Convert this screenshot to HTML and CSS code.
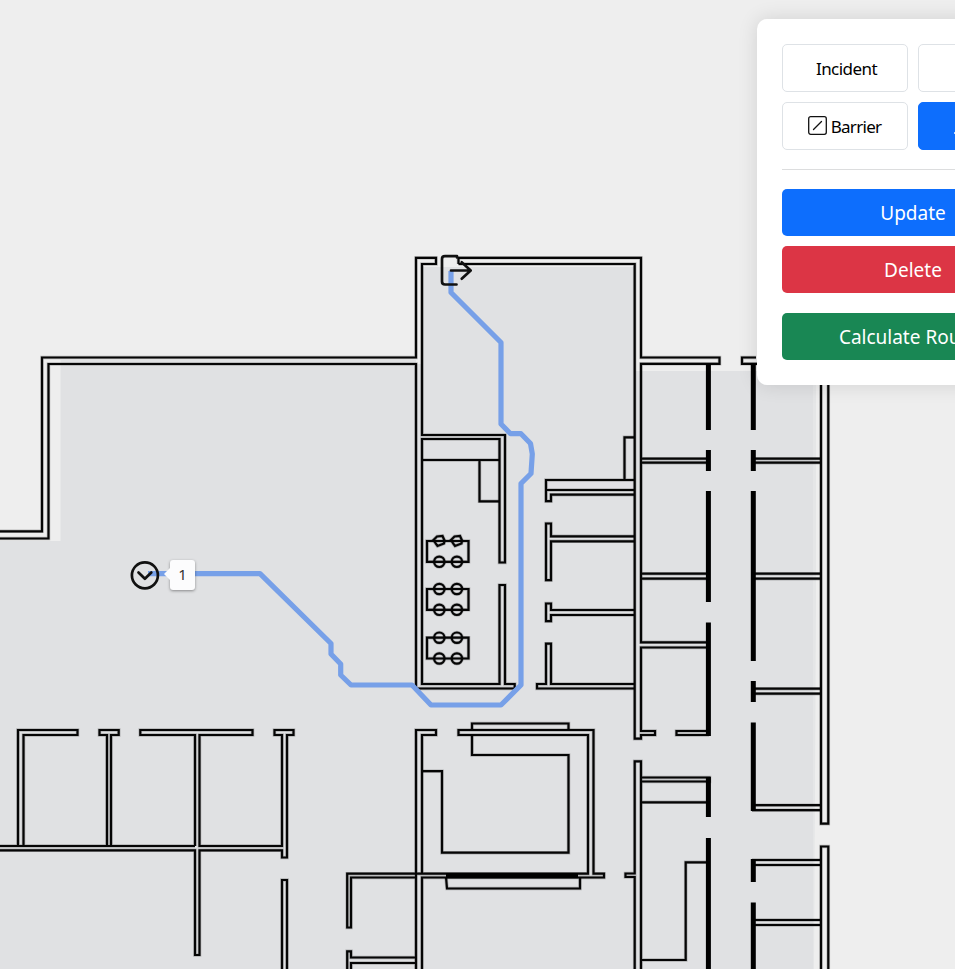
FILE: index.html
```html
<!DOCTYPE html>
<html lang="en">
<head>
<meta charset="utf-8">
<title>Floor plan routes</title>
<link rel="stylesheet" href="styles.css">
</head>
<body>
<main class="map">
  <svg class="plan" viewBox="0 0 955 969" width="955" height="969">
    <defs>
      <g id="table">
        <path d="M0 0H41.500V20.800H0Z"/>
        <circle cx="12.300" cy="20.800" r="5.200"/>
        <circle cx="29.900" cy="20.800" r="5.200"/>
      </g>
      <path id="angled-chairs" d="M6.500 -1L10 -4.500 15.500 -5 17.500 -.5 17 2.500 10.500 5 9 3ZM24 -1L27.500 -4.500 33 -5 35 -.5 34.500 2.500 28 5 26.500 3Z"/>
      <g id="chairs">
        <circle cx="12.300" cy="0" r="5.200"/>
        <circle cx="29.900" cy="0" r="5.200"/>
      </g>
      <g id="walls">
        <path d="M-5 531.300H42V357.500H416V257.800H436V264H422V435H505V562.500H499.500V439H422V684H499.500V585H505V684H514.700V688.500H416V364H48.500V538.500H-5"/>
        <path d="M422 460H499.500M479.500 460V501.300H499.500"/>
        <path d="M458.500 264V257.800H641V357.500H719.500V363.800H641V458.700H708M641 458.700V462.700H708M641 462.700V573.700H708M641 573.700V578.700H708M641 578.700V642.300H708M708 647.500H641V731H655V735H641V738.700H634.700V264H458.500"/>
        <path d="M706 731H676.500V735H709"/>
        <path d="M756 357.500H742V363.800H821M821 357.500V823.700H828.300V357.500M821 975V846.500H828.300V975"/>
        <path d="M753 458.700H821M753 462.700H821M753 573.700H821M753 578.700H821M753 688.700H821M753 693.700H821M753 805.200H821M752 810.200H821M752 860H821M753 865H821M753 920H821M753 925H821"/>
        <path d="M634.700 975V877H625.500V873.500H634.700V761.300H641V975M641 777.500H709.500V781.500H641M641 802.300H706M641 960H685.700V862.300H706"/>
        <path d="M634.700 480H546V501.200H551V494.700H634.700M546 490H634.700M624.500 480V437.300H634.700"/>
        <path d="M634.700 536.300H551V523.500H546V580.200H551V541.300H634.700M634.700 610H551V603.500H546V621.200H551V615H634.700M634.700 684H551V643.700H546V684H537V688.500H634.700"/>
        <path d="M18 846V730H77.500V735H23.500V846M107 846V735H99.500V730H118.700V735H111V846M195 846V735H140.300V730H252.500V735H199.500V846H282V735H274.500V730H293.500V735H287V857.500H282V850.300H199.500V955H195V850.300H-5M-5 846H195M282 975V880H287V975"/>
        <path d="M416 975V730H436V735H422V873.700M422 975V877.500H604V873.700H593.500V730H458.500V735H588V873.700H347.200V927.500H351V877.500H416M347.200 975V951.300H351V957.500H416M416 963H351V975"/>
        <path d="M472 730V723.500H568.500V730M472 735V755H568.500V852.700H442V771.200H422M446 877L447 888.500H580V877"/>
        <use href="#table" x="427" y="541"/>
        <use href="#angled-chairs" x="427" y="541"/>
        <use href="#table" x="427" y="589"/>
        <use href="#chairs" x="427" y="589"/>
        <use href="#table" x="427" y="637.700"/>
        <use href="#chairs" x="427" y="637.700"/>
      </g>
    </defs>
    <path class="floor" d="M0 541H60.500V360H416V364H422V267H634L635 269V371H813V969H0Z"/>
    <path class="floor-edge" d="M813 371H816V600L814 969H813Z"/>
    <path class="channel" d="M417 258H421V364H417ZM636 259H640V371H636ZM642 364H820V371H642Z"/>
    <path class="counter" d="M546 480H634V490H546Z"/>
    <use class="fringe" href="#walls"/>
    <use class="wall" href="#walls"/>
    <path class="solid" d="M708.400 364V430M708.400 450V471M708.400 491V602M708.400 622.500V736M708.400 777V817M708.400 838V969M753.300 364V430M753.300 450V471M753.300 491V661M753.300 681V702M753.300 722.500V811M753.300 859V882M753.300 902.500V969M446 875.700H578"/>
    <path class="route" d="M148 573.700H260L331 643.500V654L340.700 664V675L351 685H412L431 705H501L521 685V483.500L531 473.500L532.300 454L530.500 443.500L521 433.700H510.500L501 424V342.500L451 292.500V271"/>
    <g class="marker">
      <circle cx="144.900" cy="575.300" r="13"/>
      <path d="M138.500 572.500L144.900 578.800L151.300 572.500"/>
      <path d="M457 257.500V256.200H445Q442 256.200 442 259V281.500Q442 284.500 445 284.500H456.500M451 270.500H470.500M461.700 262.300L470.700 270.500L461.700 278.700"/>
    </g>
  </svg>
  <div class="tag">1</div>
</main>
<aside class="panel">
  <div class="tools">
    <button class="tool">Incident</button>
    <button class="tool"></button>
    <button class="tool barrier"><svg class="icon" viewBox="0 0 19 19"><rect x=".7" y=".7" width="17.600" height="17.600" rx="2"/><path d="M5.500 13.500L13.500 5.500"/></svg>Barrier</button>
    <button class="tool active"><svg class="icon" viewBox="0 0 19 19"><path d="M.5 17H18M2 16.500L9.500 3L17 16.500"/></svg></button>
  </div>
  <hr class="rule">
  <button class="action update">Update</button>
  <button class="action delete">Delete</button>
  <button class="action calculate">Calculate Routes</button>
</aside>
</body>
</html>
```
FILE: styles.css
```css
* { box-sizing: border-box; }
body {
  margin: 0;
  width: 955px;
  height: 969px;
  overflow: hidden;
  position: relative;
  background: #eee;
  font-family: "Noto Sans", "Open Sans", sans-serif;
}
.map { width: 955px; height: 969px; }
.plan { display: block; }
.floor { fill: #e0e1e3; }
.floor-edge { fill: #e5e6e7; }
.channel { fill: #eee; }
.counter { fill: #e0dfe4; }
.wall { fill: none; stroke: #050505; stroke-width: 2.2; }
.fringe { fill: none; stroke: rgba(0, 0, 0, .22); stroke-width: 3.6; }
.solid { fill: none; stroke: #000; stroke-width: 5; }
.route { fill: none; stroke: #77a0e8; stroke-width: 5.2; stroke-linejoin: round; }
.marker { fill: none; stroke: #111; stroke-width: 2.7; stroke-linecap: round; stroke-linejoin: round; }
.tag {
  position: absolute;
  left: 170px;
  top: 560px;
  width: 25px;
  height: 30px;
  border-radius: 3px;
  background: #fcfcfd;
  box-shadow: 0 1px 3px rgba(0, 0, 0, .4);
  color: #333;
  font: 15px/29px "Noto Sans", sans-serif;
  text-align: center;
}
.tag::before {
  content: "";
  position: absolute;
  left: -6px;
  top: 8px;
  border: solid transparent;
  border-width: 6px 6px 6px 0;
  border-right-color: #fcfcfd;
}
.panel {
  position: absolute;
  left: 757px;
  top: 19px;
  width: 312px;
  height: 366px;
  padding: 25px;
  border-radius: 10px;
  background: #fff;
  box-shadow: 0 0 20px rgba(0, 0, 0, .12);
}
.tools {
  display: grid;
  grid-template-columns: 126px 126px;
  grid-auto-rows: 48px;
  gap: 10px;
}
.tool {
  display: flex;
  align-items: center;
  justify-content: center;
  gap: 4px;
  padding: 1px 0 0 3px;
  border: 1px solid #dee2e6;
  border-radius: 5px;
  background: #fff;
  color: #000;
  font: 17px/24px "Noto Sans", sans-serif;
  letter-spacing: -.55px;
}
.barrier { padding: 1px 1px 0 0; letter-spacing: -.7px; }
.active {
  justify-content: flex-start;
  padding-left: 35px;
  border-color: #0d6efd;
  background: #0d6efd;
}
.icon { flex: none; width: 19px; height: 19px; margin-top: -2px; fill: none; stroke: #111; stroke-width: 1.3; stroke-linecap: round; }
.active .icon { stroke: #fff; }
.rule { margin: 19px 0; border: 0; border-top: 1px solid #dcddde; }
.action {
  display: block;
  width: 100%;
  height: 47px;
  margin: 0 0 10px;
  padding: 0;
  border: 0;
  border-radius: 5px;
  color: #fff;
  font: 19px/28px "Noto Sans", sans-serif;
}
.update { background: #0d6efd; }
.delete { background: #dc3545; }
.calculate { margin-top: 20px; background: #198754; }
```
